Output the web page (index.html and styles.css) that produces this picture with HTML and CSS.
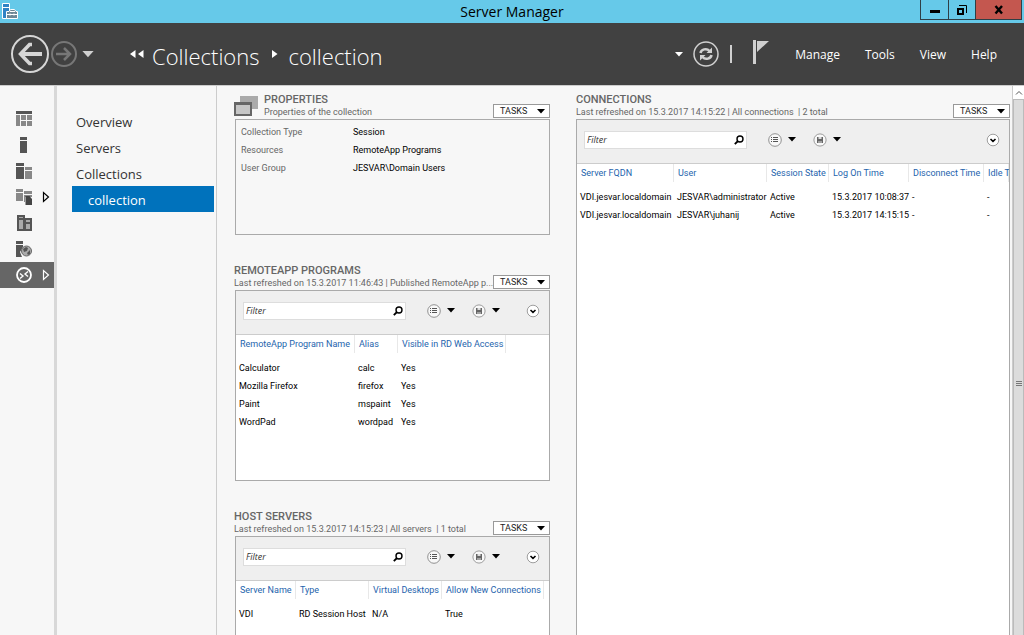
FILE: index.html
```html
<!DOCTYPE html>
<html lang="en">
  <head>
    <meta charset="UTF-8" />
    <meta name="viewport" content="width=device-width, initial-scale=1.0" />
    <title>Server Manager</title>
    <link rel="stylesheet" href="styles.css">
  </head>
  <body>
    <svg class="defs" width="0" height="0">
      <symbol id="caret" viewBox="0 0 8 5"><path d="M0 0h8L4 4.5z" /></symbol>
      <symbol id="play" viewBox="0 0 8 12"><path d="M1.5 1.5v9L6.5 6z" fill="none" stroke="currentColor" stroke-width="1.2" /></symbol>
      <symbol id="search" viewBox="0 0 10 10"><circle cx="6" cy="4" r="3" fill="none" stroke="currentColor" stroke-width="1.4" /><path d="M4 6L.8 9.2" stroke="currentColor" stroke-width="1.8" /></symbol>
      <symbol id="list" viewBox="0 0 14 14"><circle cx="7" cy="7" r="6.3" fill="#f8f8f8" stroke="#777" stroke-width=".8" /><path d="M3 4.500h1M3 6.500h1M3 8.500h1M5 4.500h5M5 6.500h5M5 8.500h5" stroke="#555" /></symbol>
      <symbol id="save" viewBox="0 0 14 14"><circle cx="7" cy="7" r="6.1" fill="#f8f8f8" stroke="#888" stroke-width=".8" /><path d="M4 4h6v6H4z" fill="#666" /><path d="M5.5 4h3v2h-3zM5.5 8h1v2h-1zM7.5 8h1v2h-1z" fill="#ddd" /></symbol>
      <symbol id="expand" viewBox="0 0 14 14"><circle cx="7" cy="7" r="5.8" fill="#fff" stroke="#888" stroke-width=".8" /><path d="M4.5 6L7 8.3 9.500 6" fill="none" stroke="#000" stroke-width="1.6" /></symbol>
    </svg>

    <header class="titlebar">
      <svg class="app-icon" width="16" height="16" viewBox="0 0 16 16">
        <path d="M.5.5h7v15h-7z" fill="#2f83c5" stroke="#fff" />
        <path d="M1 4.500h6" stroke="#fff" />
        <path d="M4.500 8.500h2.500l1.500-2h4l1.500 2h1.500v7h-11z" fill="#6d8796" stroke="#fff" />
        <path d="M8 8.500h5M5 11.500h10M8 10.500v2M12 10.500v2" stroke="#fff" />
      </svg>
      <h1>Server Manager</h1>
      <div class="window-buttons">
        <button aria-label="Minimize"><svg width="10" height="10"><path d="M0 5h10v3H0z" /></svg></button>
        <button aria-label="Restore"><svg width="10" height="10"><path d="M1 4h5v5H1z" fill="none" stroke="#000" stroke-width="2" /><path d="M2 .5h7.500V8" fill="none" stroke="#000" /></svg></button>
        <button class="close" aria-label="Close"><svg width="10" height="10"><path d="M1.500 1l6.500 7.500M8 1L1.500 8.500" stroke="#000" stroke-width="2.400" /></svg></button>
      </div>
    </header>

    <div class="toolbar">
      <button class="icon-button" aria-label="Back">
        <svg width="40" height="40" fill="none" stroke="#d6d6d6"><circle cx="20" cy="20" r="18" stroke-width="2" /><path d="M32 20H11" stroke-width="4" /><path d="M22 10.500h-2.500L10.500 20l9 9.500H22" stroke-width="3.500" /></svg>
      </button>
      <button class="icon-button" aria-label="Forward">
        <svg width="28" height="26" fill="none" stroke="#777"><circle cx="14" cy="13" r="12" stroke-width="2" /><path d="M6 13h14M14 7l6 6-6 6" stroke-width="2.500" /></svg>
      </button>
      <button class="icon-button history" aria-label="History"><svg width="12" height="7"><use href="#caret" /></svg></button>
      <nav class="crumbs">
        <svg width="14" height="8" fill="#fff"><path d="M5.500 0v8L0 4zM13.500 0v8L8 4z" /></svg>
        <a href="#">Collections</a>
        <svg class="crumb-sep" width="6" height="8" fill="#fff"><path d="M0 0v8l5.500-4z" /></svg>
        <a href="#">collection</a>
      </nav>
      <button class="icon-button small" aria-label="Refresh options"><svg width="8" height="5"><use href="#caret" /></svg></button>
      <button class="icon-button" aria-label="Refresh">
        <svg width="26" height="26" fill="none" stroke="#d0d0d0"><circle cx="13" cy="13" r="12" stroke-width="1.500" /><path d="M7.500 12c.5-3.500 6-5.500 9-2M18.500 14c-.5 3.500-6 5.500-9 2" stroke-width="2.500" /><path d="M19 6.500V12h-5.500zM7 19.500V14h5.500z" fill="#d0d0d0" stroke="none" /></svg>
      </button>
      <span class="divider"></span>
      <button class="icon-button flag" aria-label="Notifications">
        <svg width="18" height="28" fill="#d0d0d0"><path d="M1 0h3v24H1zM5 1h12L5 12z" /></svg>
      </button>
      <div class="menu">
        <button>Manage</button>
        <button>Tools</button>
        <button>View</button>
        <button>Help</button>
      </div>
    </div>

    <div class="content">
      <nav class="rail">
        <a href="#" aria-label="Dashboard"><svg width="16" height="16" fill="#888"><path d="M0 0h16v3H0z" fill="#555" /><path d="M0 4h4v11H0zM5 4h5v5H5zM11 4h5v5h-5zM5 10h5v5H5zM11 10h5v5h-5z" /></svg></a>
        <a href="#" aria-label="Local Server"><svg width="16" height="16" fill="#555"><path d="M4 0h7v3H4zM4 4h7v12H4z" /></svg></a>
        <a href="#" aria-label="All Servers"><svg width="16" height="16" fill="#555"><path d="M0 0h8v3H0zM0 4h8v12H0z" /><path d="M9 4h7v3H9zM9 8h7v8H9z" fill="#888" /></svg></a>
        <a href="#" aria-label="File Services"><svg width="16" height="16" fill="#888"><path d="M0 0h7v3H0zM0 4h7v8H0zM8 2h8v3H8zM8 6h8v2H8zM8 8h1v5H8z" /><path d="M9.500 7h4l2.500 3v6H9.500z" fill="#444" /></svg><svg class="more" width="8" height="12"><use href="#play" /></svg></a>
        <a href="#" aria-label="Hyper-V"><svg width="16" height="16"><path d="M1 0h8v3h7v13H1z" fill="#555" /><path d="M3 2h4v1H3zM3 5h4v9H3zM10 5h4v2h-4zM10 9h4v5h-4z" fill="#aaa" /></svg></a>
        <a href="#" aria-label="IIS"><svg width="16" height="16"><path d="M0 0h7v3H0zM0 4h7v2L4 11l2 5H0z" fill="#555" /><circle cx="10.500" cy="10" r="5" fill="#aaa" stroke="#666" /><path d="M7 8l3-2 2 1-1 3-3 1zM11 12l3-3v4l-2 1z" fill="#555" /></svg></a>
        <a href="#" class="selected" aria-label="Remote Desktop Services"><svg width="16" height="16" fill="none" stroke="#fff"><circle cx="8" cy="8" r="7" stroke-width="1.800" /><path d="M4 6.500L7 9l-3 2.500M12 4.500L9 7l3 2.500" stroke-width="1.400" /></svg><svg class="more" width="8" height="12"><use href="#play" /></svg></a>
      </nav>

      <nav class="pages">
        <a href="#">Overview</a>
        <a href="#">Servers</a>
        <a href="#">Collections</a>
        <a href="#" class="selected">collection</a>
      </nav>

      <main>
        <div class="column">
          <section>
            <div class="tile-head">
              <svg class="tile-icon" width="24" height="22"><path d="M6 1h18v13H6z" fill="#aaa" /><path d="M1 8h16v12H1z" fill="#c6c6c6" stroke="#666" stroke-width="2" /><path d="M0 7h18v3H0z" fill="#666" /></svg>
              <div class="tile-text">
                <h2>PROPERTIES</h2>
                <p>Properties of the collection</p>
              </div>
              <button class="tasks">TASKS <svg width="8" height="5"><use href="#caret" /></svg></button>
            </div>
            <dl class="box properties">
              <dt>Collection Type</dt><dd>Session</dd>
              <dt>Resources</dt><dd>RemoteApp Programs</dd>
              <dt>User Group</dt><dd>JESVAR\Domain Users</dd>
            </dl>
          </section>

          <section>
            <div class="tile-head">
              <div class="tile-text">
                <h2>REMOTEAPP PROGRAMS</h2>
                <p>Last refreshed on 15.3.2017 11:46:43 | Published RemoteApp p...</p>
              </div>
              <button class="tasks">TASKS <svg width="8" height="5"><use href="#caret" /></svg></button>
            </div>
            <div class="box programs">
              <div class="filter-bar">
                <div class="filter"><input type="text" placeholder="Filter" aria-label="Filter programs" /><svg width="10" height="10"><use href="#search" /></svg></div>
                <button class="query" aria-label="Criteria"><svg width="14" height="14"><use href="#list" /></svg><svg width="8" height="5"><use href="#caret" /></svg></button>
                <button class="query" aria-label="Saved queries"><svg width="14" height="14"><use href="#save" /></svg><svg width="8" height="5"><use href="#caret" /></svg></button>
                <button class="expand" aria-label="Expand"><svg width="14" height="14"><use href="#expand" /></svg></button>
              </div>
              <table>
                <colgroup><col class="w-program" /><col class="w-alias" /><col class="w-visible" /><col /></colgroup>
                <thead>
                  <tr><th><span>RemoteApp Program Name</span></th><th><span>Alias</span></th><th><span>Visible in RD Web Access</span></th><td></td></tr>
                </thead>
                <tbody>
                  <tr><td>Calculator</td><td>calc</td><td>Yes</td></tr>
                  <tr><td>Mozilla Firefox</td><td>firefox</td><td>Yes</td></tr>
                  <tr><td>Paint</td><td>mspaint</td><td>Yes</td></tr>
                  <tr><td>WordPad</td><td>wordpad</td><td>Yes</td></tr>
                </tbody>
              </table>
            </div>
          </section>

          <section>
            <div class="tile-head">
              <div class="tile-text">
                <h2>HOST SERVERS</h2>
                <p>Last refreshed on 15.3.2017 14:15:23 | All servers &nbsp;| 1 total</p>
              </div>
              <button class="tasks">TASKS <svg width="8" height="5"><use href="#caret" /></svg></button>
            </div>
            <div class="box programs">
              <div class="filter-bar">
                <div class="filter"><input type="text" placeholder="Filter" aria-label="Filter servers" /><svg width="10" height="10"><use href="#search" /></svg></div>
                <button class="query" aria-label="Criteria"><svg width="14" height="14"><use href="#list" /></svg><svg width="8" height="5"><use href="#caret" /></svg></button>
                <button class="query" aria-label="Saved queries"><svg width="14" height="14"><use href="#save" /></svg><svg width="8" height="5"><use href="#caret" /></svg></button>
                <button class="expand" aria-label="Expand"><svg width="14" height="14"><use href="#expand" /></svg></button>
              </div>
              <table>
                <colgroup><col class="w-server" /><col class="w-type" /><col class="w-type" /><col class="w-allow" /><col /></colgroup>
                <thead>
                  <tr><th><span>Server Name</span></th><th><span>Type</span></th><th><span>Virtual Desktops</span></th><th><span>Allow New Connections</span></th><td></td></tr>
                </thead>
                <tbody>
                  <tr><td>VDI</td><td>RD Session Host</td><td>N/A</td><td>True</td></tr>
                </tbody>
              </table>
            </div>
          </section>
        </div>

        <section class="connections">
          <div class="tile-head">
            <div class="tile-text">
              <h2>CONNECTIONS</h2>
              <p>Last refreshed on 15.3.2017 14:15:22 | All connections &nbsp;| 2 total</p>
            </div>
            <button class="tasks">TASKS <svg width="8" height="5"><use href="#caret" /></svg></button>
          </div>
          <div class="box">
            <div class="filter-bar">
              <div class="filter"><input type="text" placeholder="Filter" aria-label="Filter connections" /><svg width="10" height="10"><use href="#search" /></svg></div>
              <button class="query" aria-label="Criteria"><svg width="14" height="14"><use href="#list" /></svg><svg width="8" height="5"><use href="#caret" /></svg></button>
              <button class="query" aria-label="Saved queries"><svg width="14" height="14"><use href="#save" /></svg><svg width="8" height="5"><use href="#caret" /></svg></button>
              <button class="expand" aria-label="Expand"><svg width="14" height="14"><use href="#expand" /></svg></button>
            </div>
            <table>
              <colgroup><col class="w-fqdn" /><col class="w-user" /><col class="w-state" /><col class="w-logon" /><col class="w-idle" /><col /></colgroup>
              <thead>
                <tr><th><span>Server FQDN</span></th><th><span>User</span></th><th><span>Session State</span></th><th><span>Log On Time</span></th><th><span>Disconnect Time</span></th><th><span>Idle Time</span></th></tr>
              </thead>
              <tbody>
                <tr><td>VDI.jesvar.localdomain</td><td>JESVAR\administrator</td><td>Active</td><td>15.3.2017 10:08:37</td><td>-</td><td>-</td></tr>
                <tr><td>VDI.jesvar.localdomain</td><td>JESVAR\juhanij</td><td>Active</td><td>15.3.2017 14:15:15</td><td>-</td><td>-</td></tr>
              </tbody>
            </table>
          </div>
        </section>
      </main>

      <div class="scrollbar">
        <button aria-label="Scroll up"><svg width="8" height="5" fill="none" stroke="#555"><path d="M1 4.500l3-3 3 3" /></svg></button>
        <div class="thumb"><svg width="6" height="7" stroke="#777"><path d="M0 1.500h6M0 3.500h6M0 5.500h6" /></svg></div>
      </div>
    </div>
  </body>
</html>
```
FILE: styles.css
```css
* {
  box-sizing: border-box;
  margin: 0;
  padding: 0;
}
body {
  height: 100vh;
  display: flex;
  flex-direction: column;
  overflow: hidden;
  background: #f7f7f7;
  color: #000;
  font-family: "Open Sans", "Noto Sans", sans-serif;
  font-size: 12px;
}
button {
  border: none;
  background: none;
  color: inherit;
  font: inherit;
}
a {
  color: inherit;
  text-decoration: none;
}
svg {
  flex: none;
}
.defs {
  position: absolute;
}

/* title bar */
.titlebar {
  flex: none;
  height: 23px;
  display: grid;
  grid-template-columns: 1fr auto 1fr;
  padding: 0 2px;
  background: #66c9e9;
}
.app-icon {
  margin-top: 3px;
}
.titlebar h1 {
  font-size: 14px;
  font-weight: 400;
  line-height: 23px;
}
.window-buttons {
  display: flex;
  justify-self: end;
  height: 20px;
  border: 1px solid #2f3f46;
  border-top: none;
}
.window-buttons button {
  width: 27px;
  display: flex;
  align-items: center;
  justify-content: center;
}
.window-buttons button + button {
  border-left: 1px solid #2f3f46;
}
.window-buttons .close {
  width: 46px;
  background: #c4574f;
}

/* navigation bar */
.toolbar {
  flex: none;
  height: 62px;
  display: flex;
  align-items: center;
  padding: 0 27px 0 10px;
  background: #414141;
  color: #fff;
}
.icon-button {
  display: flex;
  fill: #d0d0d0;
}
.history {
  margin-left: 4px;
}
.crumbs {
  flex: 1;
  display: flex;
  align-items: center;
  margin-left: 36px;
  font-size: 22px;
  font-weight: 300;
  line-height: 30px;
}
.crumbs a {
  margin: 3px 0 0 8px;
}
.crumbs .crumb-sep {
  margin: 0 3px 0 12px;
}
.small {
  margin-right: 10px;
  fill: #fff;
}
.divider {
  width: 2px;
  height: 18px;
  margin: 0 20px 0 11px;
  background: #d0d0d0;
}
.menu {
  display: flex;
  gap: 25px;
  margin-left: 25px;
}

/* side navigation */
.content {
  flex: 1;
  min-height: 0;
  display: flex;
  border-top: 1px solid #ccc;
}
.rail {
  width: 57px;
  padding-top: 20px;
  border-right: 3px solid #d8d8d8;
}
.rail a {
  height: 26px;
  display: flex;
  align-items: center;
  padding-left: 16px;
}
.rail .more {
  margin-left: 10px;
}
.rail .selected {
  background: #666;
  color: #fff;
}
.pages {
  width: 160px;
  padding: 22px 2px 0 15px;
  border-right: 1px solid #ccc;
  color: #333;
  font-size: 13px;
  line-height: 24px;
}
.pages a {
  display: block;
  padding: 2px 0 0 4px;
}
.pages .selected {
  padding-left: 16px;
  background: #0072bc;
  color: #fff;
}

/* tiles */
main {
  flex: 1;
  min-width: 0;
  display: flex;
  gap: 26px;
  padding: 7px 2px 0 17px;
  overflow: hidden;
  font-family: Roboto, "Open Sans", sans-serif;
  font-size: 9px;
}
.column {
  flex: none;
  width: 316px;
  display: flex;
  flex-direction: column;
  gap: 29px;
}
.column section {
  flex: none;
}
.tile-head {
  height: 26px;
  display: flex;
  color: #666;
}
.tile-icon {
  margin: 2px 6px 0 0;
}
.tile-text {
  flex: 1;
  min-width: 0;
}
.tile-text h2 {
  font-size: 11px;
  font-weight: 500;
  line-height: 13px;
}
.tile-text p {
  line-height: 12px;
  white-space: nowrap;
}
.tasks {
  width: 57px;
  height: 14px;
  display: flex;
  align-items: center;
  justify-content: space-between;
  margin: 11px 0 0 4px;
  padding: 0 4px 0 6px;
  border: 1px solid #999;
  background: #fff;
  color: #222;
  line-height: 12px;
}
.box {
  margin-left: 1px;
  border: 1px solid #aaa;
  background: #fff;
}
.properties {
  height: 116px;
  display: grid;
  grid-template-columns: 112px 1fr;
  align-content: start;
  padding: 3px 5px;
  background: #f7f7f7;
  line-height: 18px;
}
.properties dt {
  color: #666;
}
.programs {
  min-height: 191px;
}
.connections {
  flex: 1;
  min-width: 0;
  display: flex;
  flex-direction: column;
}
.connections .box {
  flex: 1;
  margin-left: 0;
  border-bottom: none;
  overflow: hidden;
}

/* filter row */
.filter-bar {
  height: 44px;
  display: flex;
  align-items: center;
  padding: 0 9px 4px 7px;
  border-bottom: 1px solid #ccc;
  background: #efefef;
}
.filter {
  width: 163px;
  height: 18px;
  display: flex;
  align-items: center;
  padding: 0 2px;
  border: 1px solid #ddd;
  background: #fff;
}
.filter input {
  flex: 1;
  min-width: 0;
  border: none;
  outline: none;
  font: italic 9px "Open Sans", "Noto Sans", sans-serif;
}
.filter input::placeholder {
  color: #333;
}
.query {
  display: flex;
  align-items: center;
  gap: 6px;
  margin-left: 17px;
}
.filter + .query {
  margin-left: 21px;
}
.expand {
  display: flex;
  margin-left: auto;
}

/* tables */
table {
  width: 100%;
  table-layout: fixed;
  border-collapse: collapse;
  line-height: 18px;
  white-space: nowrap;
}
th {
  padding-bottom: 6px;
  color: #1e64ad;
  font-weight: 400;
  text-align: left;
}
th span {
  display: block;
  padding-left: 4px;
  border-right: 1px solid #e8e8e8;
}
td {
  padding-left: 3px;
}
.w-program {
  width: 119px;
}
.w-alias {
  width: 43px;
}
.w-visible {
  width: 108px;
}
.w-server {
  width: 60px;
}
.w-type {
  width: 73px;
}
.w-allow {
  width: 102px;
}
.w-fqdn {
  width: 97px;
}
.w-user {
  width: 93px;
}
.w-state {
  width: 62px;
}
.w-logon {
  width: 80px;
}
.w-idle {
  width: 75px;
}

/* scrollbar */
.scrollbar {
  width: 12px;
  display: flex;
  flex-direction: column;
  border-left: 1px solid #ccc;
}
.scrollbar button {
  height: 13px;
  display: flex;
  align-items: center;
  justify-content: center;
  background: #fff;
}
.thumb {
  flex: 1;
  display: flex;
  align-items: center;
  justify-content: center;
  padding-top: 32px;
  border: 1px solid #bbb;
  border-bottom: none;
  background: #dcdcdc;
}
```
